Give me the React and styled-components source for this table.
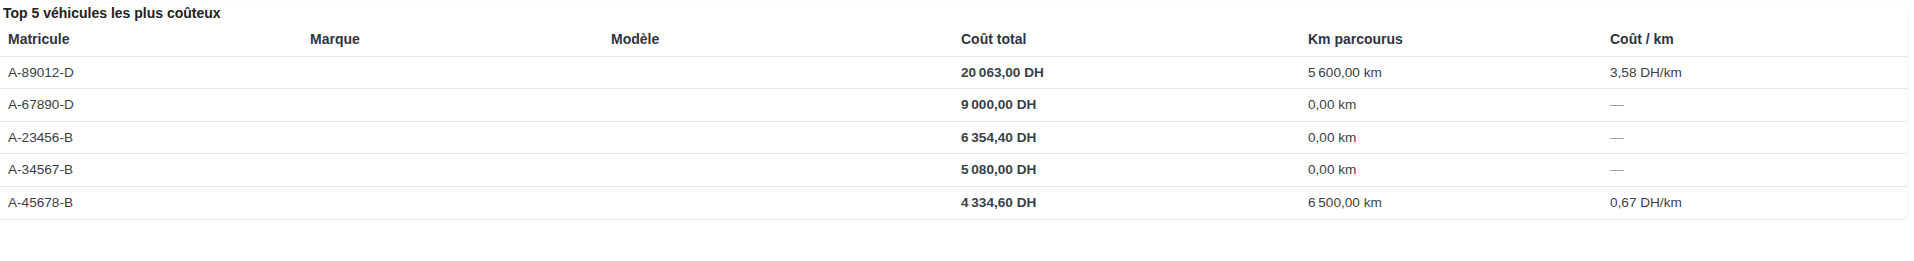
import React from "react";
import styled, { createGlobalStyle } from "styled-components";

const Global = createGlobalStyle`
  html, body { margin: 0; padding: 0; background: #ffffff; }
  body { font-family: "Liberation Sans", Arial, sans-serif; color: #333; }
`;

const Card = styled.section`
  margin-top: 3px;
  width: 1907px;
  background: #fff;
  border-radius: 0 8px 8px 0;
  box-shadow: 0 1px 3px rgba(15, 23, 42, 0.12);
  overflow: hidden;
`;

const Title = styled.h3`
  margin: 0;
  padding: 2px 0 3px 3px;
  font-size: 14px;
  line-height: 16px;
  font-weight: 700;
  color: #222;
`;

const Table = styled.table`
  width: 100%;
  border-collapse: collapse;
  table-layout: fixed;
  font-size: 13.6px;
`;

const Th = styled.th`
  text-align: left;
  font-size: 14px;
  font-weight: 700;
  color: #2f3440;
  padding: 8px 8px;
  line-height: 15.6px;
  border-bottom: 1px solid #e3e7ee;
`;

const Td = styled.td`
  padding: 8px 8px;
  line-height: 15.6px;
  color: ${(p) => (p.$muted ? "#9aa0a8" : "#3a3f48")};
  font-weight: ${(p) => (p.$strong ? 700 : 400)};
  border-bottom: 1px solid #e3e7ee;
`;

const cols = [302, 301, 350, 347, 302, 305];

const rows = [
  { m: "A-89012-D", cost: "20\u202F063,00 DH", km: "5\u202F600,00 km", ck: "3,58 DH/km" },
  { m: "A-67890-D", cost: "9\u202F000,00 DH", km: "0,00 km", ck: null },
  { m: "A-23456-B", cost: "6\u202F354,40 DH", km: "0,00 km", ck: null },
  { m: "A-34567-B", cost: "5\u202F080,00 DH", km: "0,00 km", ck: null },
  { m: "A-45678-B", cost: "4\u202F334,60 DH", km: "6\u202F500,00 km", ck: "0,67 DH/km" },
];

export default function App() {
  return (
    <>
      <Global />
      <Card>
        <Title>Top 5 véhicules les plus coûteux</Title>
        <Table>
          <colgroup>
            {cols.map((w, i) => (
              <col key={i} style={{ width: w }} />
            ))}
          </colgroup>
          <thead>
            <tr>
              <Th>Matricule</Th>
              <Th>Marque</Th>
              <Th>Modèle</Th>
              <Th>Coût total</Th>
              <Th>Km parcourus</Th>
              <Th>Coût / km</Th>
            </tr>
          </thead>
          <tbody>
            {rows.map((r) => (
              <tr key={r.m}>
                <Td>{r.m}</Td>
                <Td></Td>
                <Td></Td>
                <Td $strong>{r.cost}</Td>
                <Td>{r.km}</Td>
                {r.ck ? <Td>{r.ck}</Td> : <Td $muted>—</Td>}
              </tr>
            ))}
          </tbody>
        </Table>
      </Card>
    </>
  );
}
